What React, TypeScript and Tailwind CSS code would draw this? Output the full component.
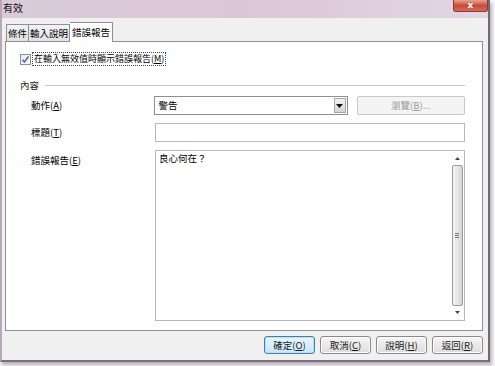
import React from 'react'

const font = { fontFamily: '"Noto Sans CJK TC", "Noto Sans", sans-serif' }

function Mn({ text, k }: { text: string; k: string }) {
  return (
    <span>
      {text}(<span className="underline">{k}</span>)
    </span>
  )
}

function DlgButton({ label, k, primary }: { label: string; k: string; primary?: boolean }) {
  return (
    <div
      className={`w-[51px] h-[18px] flex items-center justify-center rounded-[3px] border text-[9.5px] text-[#1a1a1a] ${
        primary
          ? 'border-[#3c7fb1] bg-gradient-to-b from-[#eaf6fd] to-[#c9e5f6] shadow-[inset_0_0_0_1px_#b9e0f7]'
          : 'border-[#8a8a8a] bg-gradient-to-b from-[#f6f6f6] to-[#dcdcdc] shadow-[inset_0_0_0_1px_#fbfbfb]'
      }`}
    >
      <Mn text={label} k={k} />
    </div>
  )
}

export default function App() {
  return (
    <div className="w-[495px] h-[366px] bg-[#f7f4f7] overflow-hidden" style={font}>
      <div className="w-[490px] h-[362px] flex flex-col border-l-2 border-r-2 border-b-2 border-l-[#b9a8b9] border-r-[#6f6a70] border-b-[#77707a] shadow-[2px_3px_3px_rgba(120,100,120,0.45)]">
        {/* title bar */}
        <div className="h-[18px] flex items-start justify-between bg-gradient-to-r from-[#d9cbd8] via-[#dac6d9] to-[#e3d6e4]">
          <span className="text-[10px] leading-none pt-[3px] pl-[1px] text-[#111]">有效</span>
          <div className="w-[35px] h-[12px] rounded-b-[3px] border border-t-0 border-[#8c3a32] bg-gradient-to-b from-[#e6a193] via-[#c9493a] to-[#d56a57] flex items-center justify-center">
            <span className="text-white text-[9px] font-bold leading-none" style={{ fontFamily: '"DejaVu Sans", sans-serif' }}>
              x
            </span>
          </div>
        </div>

        {/* body */}
        <div className="flex-1 bg-[#f0f0f0] flex flex-col px-[3px]">
          {/* tabs */}
          <div className="h-[23px] flex items-end pl-[1px] pt-[4px]">
            <div className="h-[17px] px-[1px] flex items-center text-[9.5px] border border-b-0 border-[#8e9099] bg-gradient-to-b from-[#f3f3f3] to-[#e2e2e2]">
              條件
            </div>
            <div className="h-[17px] px-[1px] flex items-center text-[9.5px] border border-b-0 border-l-0 border-[#8e9099] bg-gradient-to-b from-[#f3f3f3] to-[#e2e2e2]">
              輸入說明
            </div>
            <div className="h-[20px] px-[2px] -mb-px relative z-10 flex items-center text-[9.5px] border border-b-0 border-l-0 border-[#8e9099] bg-white">
              錯誤報告
            </div>
          </div>

          {/* panel */}
          <div className="h-[290px] w-[478px] bg-white border border-[#8e9099] flex flex-col pl-[14px] pr-[17px] pt-[10px]">
            <div className="h-[14px] flex items-center gap-[1px]">
              <div className="w-[11px] h-[11px] border border-[#8f8f8f] bg-gradient-to-br from-[#e9e9e9] to-[#fdfdfd] flex items-center justify-center">
                <svg width="9" height="9" viewBox="0 0 9 9">
                  <path d="M1.5 4.8 L3.5 7 L7.5 1.5" fill="none" stroke="#3f5ea5" strokeWidth="1.4" />
                </svg>
              </div>
              <div className="border border-dotted border-[#444] px-[1px] text-[9px] leading-[12px]">
                在輸入無效值時顯示錯誤報告(<span className="underline">M</span>)
              </div>
            </div>

            <div className="mt-[13px] h-[12px] flex items-center">
              <span className="text-[9.5px] text-[#222]">內容</span>
              <div className="flex-1 ml-[6px] h-px bg-[#c8c8c8]" />
            </div>

            <div className="mt-[5px] flex items-center">
              <div className="w-[135px] pl-[11px] text-[9.5px]">
                <Mn text="動作" k="A" />
              </div>
              <div className="w-[194px] h-[19px] border border-[#8e8f8f] flex items-center justify-between pl-[3px] pr-[1px]">
                <span className="text-[9.5px]">警告</span>
                <div className="w-[12px] h-[15px] border border-[#a7a7a7] bg-gradient-to-b from-[#f2f2f2] to-[#d5d5d5] flex items-center justify-center">
                  <svg width="7" height="4" viewBox="0 0 7 4">
                    <path d="M0 0 H7 L3.5 4 Z" fill="#111" />
                  </svg>
                </div>
              </div>
              <div className="ml-[9px] w-[109px] h-[19px] rounded-[2px] border border-[#c9c9c9] bg-[#f4f4f4] flex items-center justify-center text-[9.5px] text-[#9a9a9a]">
                瀏覽(<span className="underline">B</span>)...
              </div>
            </div>

            <div className="mt-[8px] flex items-center">
              <div className="w-[135px] pl-[11px] text-[9.5px]">
                <Mn text="標題" k="T" />
              </div>
              <div className="flex-1 h-[19px] border border-[#b8b8b8]" />
            </div>

            <div className="mt-[8px] flex items-start">
              <div className="w-[135px] pl-[11px] pt-[3px] text-[9.5px]">
                <Mn text="錯誤報告" k="E" />
              </div>
              <div className="flex-1 h-[171px] border border-[#b8b8b8] flex">
                <div className="flex-1 pl-[3px] pt-[1px] text-[9.5px] leading-[12px]">良心何在？</div>
                <div className="w-[13px] flex flex-col items-center py-[1px] pr-[1px]">
                  <div className="h-[13px] flex items-center justify-center">
                    <svg width="5" height="3" viewBox="0 0 5 3">
                      <path d="M0 3 L2.5 0 L5 3 Z" fill="#444" />
                    </svg>
                  </div>
                  <div className="flex-1 w-[11px] rounded-[2px] border border-[#9c9c9c] bg-gradient-to-r from-[#f4f4f4] via-[#e6e6e6] to-[#d2d2d2] flex items-center justify-center">
                    <div className="flex flex-col gap-[1px]">
                      <div className="w-[4px] h-px bg-[#777]" />
                      <div className="w-[4px] h-px bg-[#777]" />
                      <div className="w-[4px] h-px bg-[#777]" />
                    </div>
                  </div>
                  <div className="h-[13px] flex items-center justify-center">
                    <svg width="5" height="3" viewBox="0 0 5 3">
                      <path d="M0 0 H5 L2.5 3 Z" fill="#444" />
                    </svg>
                  </div>
                </div>
              </div>
            </div>
          </div>

          {/* buttons */}
          <div className="mt-[5px] flex justify-end gap-[5px] pr-[2px]">
            <DlgButton label="確定" k="O" primary />
            <DlgButton label="取消" k="C" />
            <DlgButton label="說明" k="H" />
            <DlgButton label="返回" k="R" />
          </div>
        </div>
      </div>
    </div>
  )
}
